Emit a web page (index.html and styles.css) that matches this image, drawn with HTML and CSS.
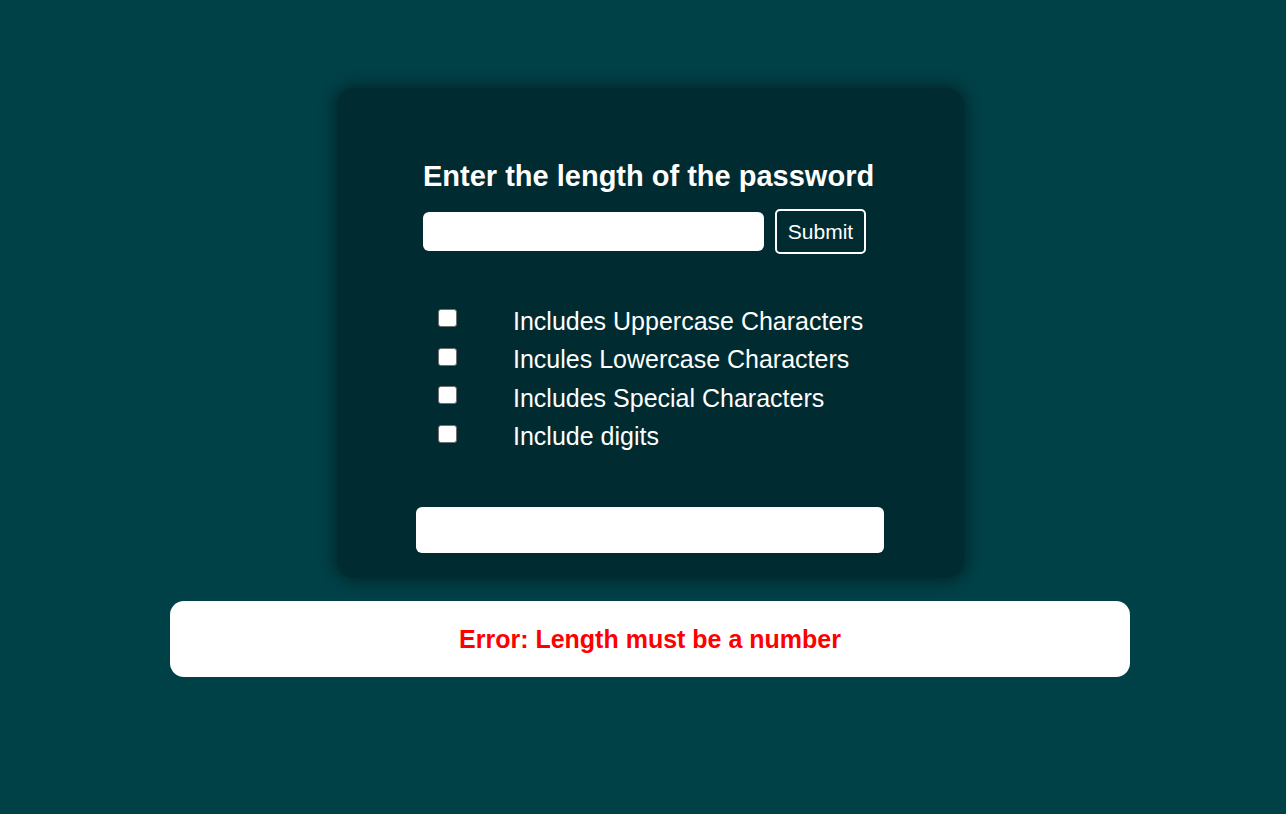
FILE: index.html
```html
<!DOCTYPE html>
<html>
<head>
<meta charset="utf-8">
<link rel="stylesheet" href="styles.css">
</head>
<body>
<div class="page">
  <div class="card">
    <div class="inner">
      <h2 class="title">Enter the length of the password</h2>
      <div class="row">
        <input class="len" type="text">
        <button class="submit">Submit</button>
      </div>
      <ul class="opts">
        <li><input type="checkbox" class="cb"><span>Includes Uppercase Characters</span></li>
        <li><input type="checkbox" class="cb"><span>Incules Lowercase Characters</span></li>
        <li><input type="checkbox" class="cb"><span>Includes Special Characters</span></li>
        <li><input type="checkbox" class="cb"><span>Include digits</span></li>
      </ul>
    </div>
    <div class="output"></div>
  </div>
  <div class="error">Error: Length must be a number</div>
</div>
</body>
</html>
```
FILE: styles.css
```css
html, body {
  margin: 0;
  padding: 0;
  background: #004047;
  font-family: "Liberation Sans", Arial, sans-serif;
  color: #fff;
}
.page {
  padding: 88px 0 0 14px;
  display: flex;
  flex-direction: column;
  align-items: center;
}
.card {
  width: 627px;
  box-sizing: border-box;
  height: 490px;
  background: #002b30;
  border-radius: 18px;
  box-shadow: 0 0 14px 4px rgba(0, 0, 0, 0.35);
  padding-top: 71px;
  display: flex;
  flex-direction: column;
  align-items: center;
}
.inner {
  width: 454px;
}
.title {
  margin: 0;
  font-size: 29px;
  font-weight: bold;
  line-height: 34px;
  white-space: nowrap;
}
.row {
  display: flex;
  align-items: center;
  gap: 11px;
  margin-top: 16px;
}
.len {
  width: 341px;
  height: 39px;
  box-sizing: border-box;
  border: none;
  border-radius: 6px;
  background: #fff;
  outline: none;
}
.submit {
  width: 91px;
  height: 45px;
  box-sizing: border-box;
  background: transparent;
  border: 2px solid #fff;
  border-radius: 5px;
  color: #fff;
  font-family: "Liberation Sans", Arial, sans-serif;
  font-size: 21px;
  padding: 0;
}
.opts {
  list-style: none;
  margin: 48px 0 0 0;
  padding: 0 0 0 15px;
}
.opts li {
  display: flex;
  align-items: center;
  height: 38.5px;
  font-size: 25px;
  white-space: nowrap;
}
.cb {
  appearance: none;
  -webkit-appearance: none;
  margin: 0 56px 0 0;
  width: 19px;
  height: 18px;
  box-sizing: border-box;
  background: #fff;
  border: 1.5px solid #6f6f6f;
  border-radius: 3px;
  position: relative;
  top: -3px;
}
.output {
  width: 468px;
  height: 46px;
  background: #fff;
  border-radius: 6px;
  margin-top: 51px;
}
.error {
  width: 960px;
  height: 76px;
  margin-top: 23px;
  background: #fff;
  border-radius: 14px;
  color: #f00;
  font-size: 25px;
  font-weight: bold;
  display: flex;
  align-items: center;
  justify-content: center;
}
```
